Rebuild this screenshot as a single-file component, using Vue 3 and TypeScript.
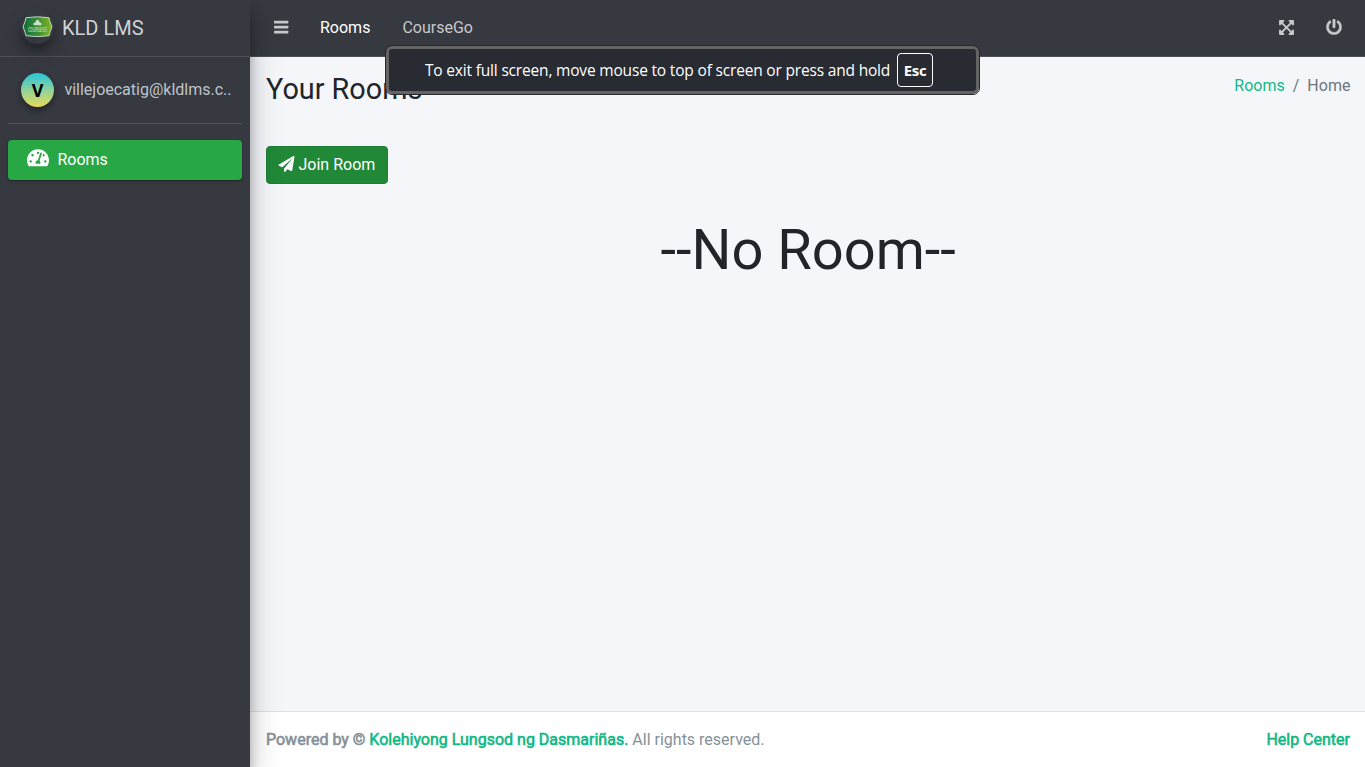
<script setup lang="ts">
interface NavLink {
  label: string
  active: boolean
}

const navLinks: NavLink[] = [
  { label: 'Rooms', active: true },
  { label: 'CourseGo', active: false },
]
</script>

<template>
  <div class="app">
    <aside class="sidebar">
      <div class="brand">
        <svg class="logo" viewBox="0 0 33 33">
          <defs>
            <linearGradient id="badge" x1="0" x2="1" y1="0" y2="0">
              <stop offset="0" stop-color="#126b3c" />
              <stop offset="0.5" stop-color="#368f36" />
              <stop offset="1" stop-color="#86b51f" />
            </linearGradient>
          </defs>
          <path d="M5 6.700Q16.500 4.900 28 6.700L28.900 10.400 30.900 15.700 28.900 21.500 28 24.700Q16.500 26.500 5 24.700L4.100 21.500 2.100 15.700 4.100 10.400Z" fill="url(#badge)" stroke="#c5d5c7" stroke-width="1" />
          <path d="M12.500 14.200v-2l2-1 1-2.300h2l1 2.300 2 1v2z" fill="#cfdfca" />
          <text class="logo-text" transform="translate(16.500 21.300) scale(0.480 1)" text-anchor="middle">COURSEGO</text>
        </svg>
        <span class="brand-name">KLD LMS</span>
      </div>
      <div class="side-body">
        <div class="user">
          <span class="avatar">V</span>
          <span class="email">villejoecatig@kldlms.c..</span>
        </div>
        <a class="side-link">
          <svg class="gauge" viewBox="0 0 576 512"><path fill="currentColor" d="M288 32C128.940 32 0 160.940 0 320c0 52.800 14.250 102.260 39.060 144.800 5.610 9.620 16.300 15.200 27.440 15.200h443c11.140 0 21.830-5.580 27.440-15.200C561.750 422.260 576 372.800 576 320c0-159.060-128.940-288-288-288zm0 64c14.710 0 26.580 10.130 30.320 23.650-1.110 2.260-2.640 4.230-3.450 6.670l-9.220 27.670c-5.130 3.490-10.970 6.010-17.640 6.010-17.670 0-32-14.330-32-32S270.330 96 288 96zM96 384c-17.670 0-32-14.330-32-32s14.330-32 32-32 32 14.330 32 32-14.330 32-32 32zm48-160c-17.670 0-32-14.330-32-32s14.330-32 32-32 32 14.330 32 32-14.330 32-32 32zm246.770-72.410l-61.330 184C343.130 347.330 352 364.540 352 384c0 11.720-3.380 22.550-8.880 32H232.880c-5.500-9.450-8.880-20.280-8.880-32 0-33.940 26.500-61.430 59.900-63.590l61.340-184.010c4.170-12.560 17.730-19.450 30.360-15.170 12.570 4.190 19.350 17.790 15.170 30.360zm14.660 57.200l15.520-46.550c3.470-1.290 7.130-2.230 11.050-2.230 17.670 0 32 14.330 32 32s-14.330 32-32 32c-11.380-.01-20.890-6.280-26.570-15.220zM480 384c-17.670 0-32-14.330-32-32s14.330-32 32-32 32 14.330 32 32-14.330 32-32 32z" /></svg>
          <span>Rooms</span>
        </a>
      </div>
    </aside>

    <div class="main">
      <header class="topbar">
        <svg class="bars" viewBox="0 0 15 16"><g fill="currentColor"><rect y="1.700" width="14.300" height="2.700" rx="0.500" /><rect y="6.700" width="14.300" height="2.700" rx="0.500" /><rect y="11.700" width="14.300" height="2.700" rx="0.500" /></g></svg>
        <a v-for="link in navLinks" :key="link.label" class="nav-link" :class="{ active: link.active }">{{ link.label }}</a>
        <div class="actions">
          <svg class="expand" viewBox="0 0 448 512"><path fill="currentColor" d="M448 344v112a23.940 23.940 0 0 1-24 24H312c-21.390 0-32.090-25.900-17-41l36.200-36.200L224 295.600 116.770 402.900 153 439c15.090 15.100 4.390 41-17 41H24a23.940 23.940 0 0 1-24-24V344c0-21.400 25.890-32.100 41-17l36.190 36.200L184.460 256 77.180 148.700 41 185c-15.100 15.100-41 4.400-41-17V56a23.940 23.940 0 0 1 24-24h112c21.390 0 32.090 25.900 17 41l-36.200 36.200L224 216.400l107.230-107.300L295 73c-15.090-15.100-4.390-41 17-41h112a23.940 23.940 0 0 1 24 24v112c0 21.400-25.890 32.100-41 17l-36.190-36.200L263.540 256l107.280 107.300L407 327.100c15.100-15.200 41-4.500 41 16.900z" /></svg>
          <svg class="power" viewBox="0 0 512 512"><path fill="currentColor" d="M400 54.100c63 45 104 118.600 104 201.900 0 136.800-110.800 247.700-247.500 248C120 504.300 8.200 393 8 256.400 7.900 173.100 48.900 99.300 111.800 54.200c11.700-8.300 28-4.800 35 7.700L162.600 90c5.900 10.500 3.100 23.800-6.600 31-41.500 30.800-68 79.600-68 134.900-.1 92.300 74.500 168.100 168 168.100 91.600 0 168.600-74.200 168-169.100-.3-51.800-24.700-101.800-68.100-134-9.700-7.200-12.400-20.500-6.500-30.900l15.800-28.100c7-12.400 23.200-16.100 34.800-7.800zM296 264V24c0-13.300-10.700-24-24-24h-32c-13.300 0-24 10.700-24 24v240c0 13.300 10.700 24 24 24h32c13.300 0 24-10.700 24-24z" /></svg>
        </div>
      </header>

      <main class="content">
        <div class="heading-row">
          <h1 class="title">Your Rooms</h1>
          <nav class="breadcrumb">
            <a class="crumb-link">Rooms</a>
            <span>/</span>
            <span>Home</span>
          </nav>
        </div>
        <button class="join" type="button">
          <svg class="plane" viewBox="0 0 512 512"><path fill="currentColor" d="M476 3.200L12.500 270.600c-18.100 10.400-15.800 35.600 2.200 43.200L121 358.400l287.300-253.200c5.500-4.900 13.300 2.600 8.600 8.300L176 407v80.500c0 23.600 28.500 32.900 42.500 15.800L282 426l124.600 52.200c14.200 6 30.400-2.900 33-18.200l72-432C515 7.800 493.300-6.800 476 3.200z" /></svg>
          <span>Join Room</span>
        </button>
        <div class="empty">--No Room--</div>
      </main>

      <footer class="footer">
        <div>
          <span class="strong">Powered by © <a class="foot-link">Kolehiyong Lungsod ng Dasmariñas.</a></span> All rights reserved.
        </div>
        <a class="strong foot-link">Help Center</a>
      </footer>
    </div>

    <div class="toast">
      <span class="toast-text">To exit full screen, move mouse to top of screen or press and hold</span>
      <kbd class="key">Esc</kbd>
    </div>
  </div>
</template>

<style>
body {
  margin: 0;
  overflow: hidden;
}
</style>

<style scoped>
.app,
.app * {
  box-sizing: border-box;
}
.app {
  position: relative;
  display: flex;
  width: 1365px;
  height: 767px;
  font: 400 16px/24px Roboto, sans-serif;
  color: #212529;
  background: #f4f6fa;
}
svg {
  display: block;
  flex: none;
}
.sidebar {
  z-index: 2;
  width: 250px;
  flex: none;
  background: #363940;
  box-shadow: 0 14px 28px rgba(0, 0, 0, 0.25), 0 10px 10px rgba(0, 0, 0, 0.22);
}
.brand {
  display: flex;
  align-items: center;
  height: 57px;
  padding: 0 0 1px 21px;
  border-bottom: 1px solid #4b5059;
}
.logo {
  width: 33px;
  height: 33px;
  margin-top: -1px;
  border-radius: 50%;
  box-shadow: 0 10px 20px rgba(0, 0, 0, 0.19), 0 6px 6px rgba(0, 0, 0, 0.23);
}
.logo-text {
  font: 700 6.8px "Liberation Sans", sans-serif;
  fill: #b9d0b2;
}
.brand-name {
  margin-left: 8px;
  font-size: 20px;
  line-height: 30px;
  color: #d0d2d4;
}
.side-body {
  padding: 0 8px;
}
.user {
  display: flex;
  align-items: center;
  height: 67px;
  padding-left: 13px;
  border-bottom: 1px solid #4f545c;
}
.avatar {
  display: flex;
  align-items: center;
  justify-content: center;
  width: 33px;
  height: 34px;
  border-radius: 50%;
  background: linear-gradient(#25c4d8, #8fd29b 50%, #e8db58);
  color: #000;
  font: 700 18px/34px "Open Sans", sans-serif;
  box-shadow: 0 3px 6px rgba(0, 0, 0, 0.16), 0 3px 6px rgba(0, 0, 0, 0.23);
}
.email {
  margin-left: 10.4px;
  color: #bfc3ca;
}
.side-link {
  display: flex;
  align-items: center;
  height: 40px;
  margin-top: 16px;
  padding: 0 0 1px 19px;
  border-radius: 4px;
  background: #28a745;
  color: #fff;
  box-shadow: 0 1px 3px rgba(0, 0, 0, 0.12), 0 1px 2px rgba(0, 0, 0, 0.24);
}
.gauge {
  width: 22px;
  height: 19.5px;
  margin: -3px 8.4px 0 0;
}
.main {
  display: flex;
  flex: 1;
  flex-direction: column;
  min-width: 0;
}
.topbar {
  display: flex;
  align-items: center;
  height: 57px;
  padding: 0 23px 1px 24px;
  background: #363940;
  border-bottom: 1px solid #4b5059;
  color: #c6c8ca;
}
.bars {
  width: 15px;
  height: 16px;
  margin: -2px -1px 0 0;
}
.nav-link {
  margin-left: 32px;
}
.active {
  color: #fff;
}
.actions {
  display: flex;
  align-items: center;
  gap: 32px;
  margin-left: auto;
}
.expand {
  width: 15px;
  height: 17px;
  margin-top: -1px;
}
.power {
  width: 16px;
  height: 16px;
  margin-top: -1px;
  stroke: currentColor;
  stroke-width: 10px;
}
.content {
  flex: 1;
  padding: 15px 14.6px 0 16px;
}
.heading-row {
  display: flex;
  justify-content: space-between;
  height: 74px;
}
.title {
  margin: 0;
  font-size: 28.8px;
  font-weight: 400;
  line-height: 34px;
}
.breadcrumb {
  display: flex;
  gap: 8px;
  padding-top: 2px;
  color: #6c757d;
}
.crumb-link,
.foot-link {
  color: #12b886;
}
.join {
  display: flex;
  align-items: center;
  width: 122px;
  height: 38px;
  padding: 0 0 1px 11px;
  border: 1px solid #1e7e34;
  border-radius: 4px;
  background: #218838;
  color: #fff;
  font: inherit;
  white-space: nowrap;
}
.plane {
  width: 17px;
  height: 16px;
  margin: -2px 3.5px 0 0;
}
.empty {
  margin-top: 33px;
  text-align: center;
  font-size: 56px;
  line-height: 67px;
}
.footer {
  display: flex;
  justify-content: space-between;
  height: 56px;
  padding: 16px 15px 0 16px;
  border-top: 1px solid #dee2e6;
  background: #fff;
  color: #869099;
}
.strong {
  -webkit-text-stroke: 0.6px currentColor;
}
.toast {
  position: absolute;
  z-index: 5;
  left: 386px;
  top: 46px;
  display: flex;
  align-items: center;
  width: 593px;
  height: 48px;
  padding-left: 36px;
  border: 3px solid #636363;
  border-radius: 6px;
  outline: 1px solid #26282c;
  background: #282b32;
  color: #fff;
}
.toast-text {
  width: 472px;
  margin-top: -1px;
  font-family: "Open Sans", sans-serif;
  font-size: 15.5px;
  letter-spacing: -0.18px;
  white-space: nowrap;
}
.key {
  display: flex;
  align-items: center;
  justify-content: center;
  width: 36px;
  height: 34px;
  border: 1px solid #fff;
  border-radius: 4px;
  font: 700 15px/20px "Open Sans", sans-serif;
  letter-spacing: -0.3px;
}
</style>
